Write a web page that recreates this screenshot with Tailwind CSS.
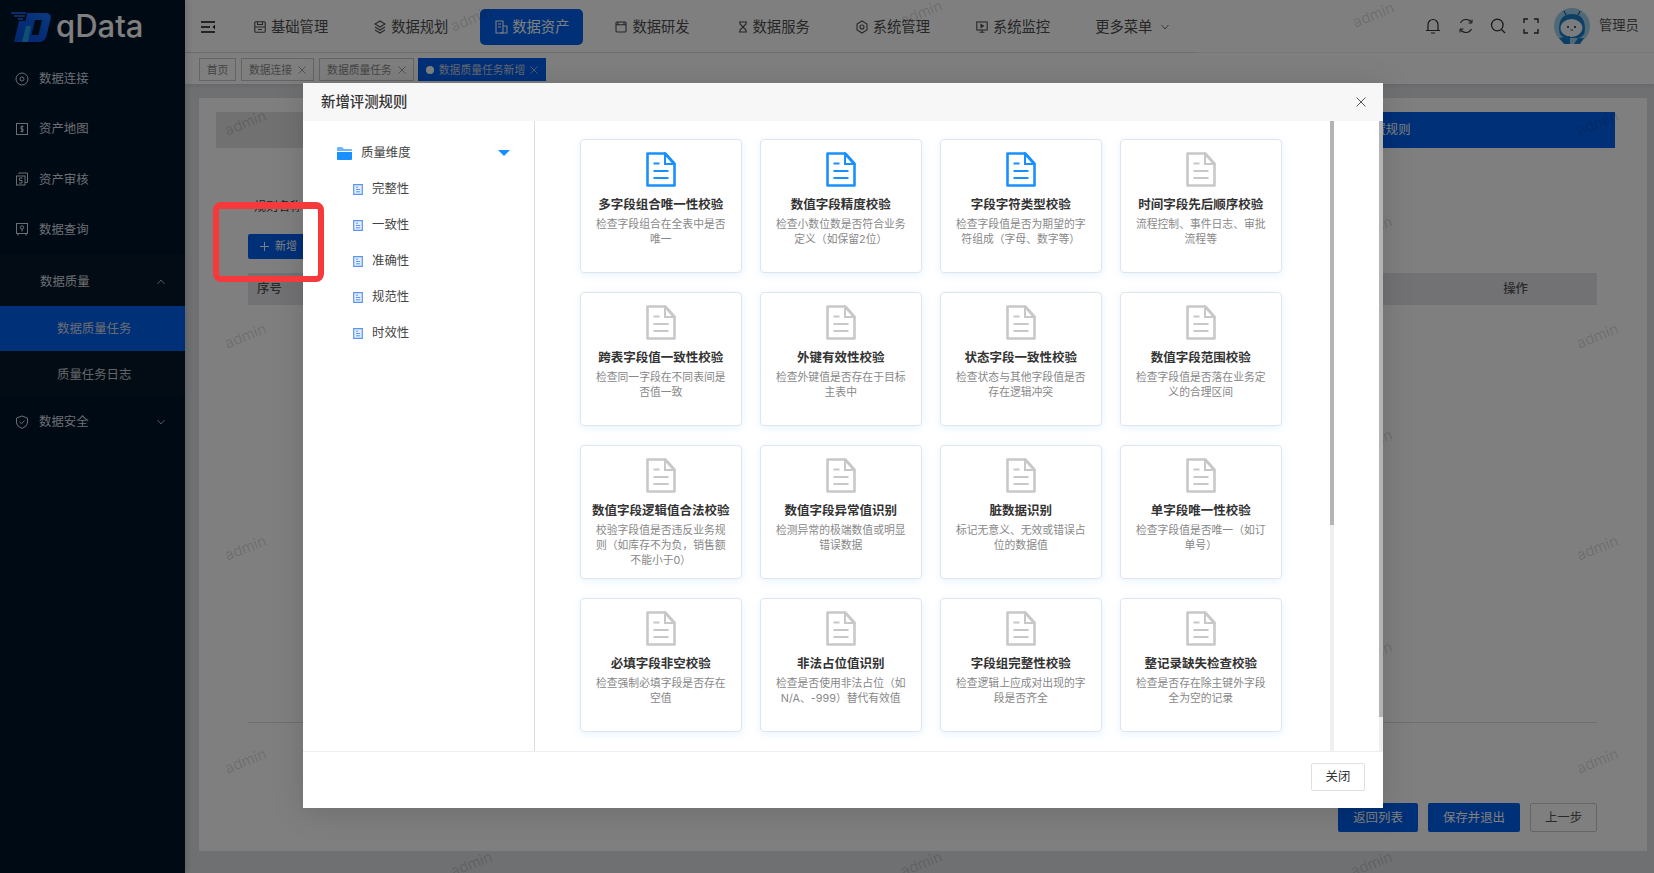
<!DOCTYPE html>
<html lang="zh-CN">
<head>
    <meta charset="UTF-8">
    <title>qData</title>
    <script src="https://cdn.jsdelivr.net/npm/@tailwindcss/browser@4"></script>
</head>
<body class="relative h-screen w-full overflow-hidden bg-[#dfe1e5] font-['Inter','Noto_Sans_CJK_SC',sans-serif]">
    <svg class="hidden">
        <symbol id="doc" viewBox="0 0 30 35">
            <path d="M1.5 1.5H19.5L28.5 11.5V33.5H1.5Z" fill="none" stroke="currentColor" stroke-width="2.6" stroke-linejoin="round"/>
            <path d="M19 2V12H28Z" fill="none" stroke="currentColor" stroke-width="2"/>
            <path d="M7.5 11.5H13.5M7.5 19H22.5M7.5 26H22.5" stroke="currentColor" stroke-width="2.2"/>
        </symbol>
        <symbol id="leaf" viewBox="0 0 10 11">
            <path d="M.7.7H9.3V10.3H.7Z" fill="#e6efff" stroke="#5b93f5" stroke-width="1.2"/>
            <path d="M3 3.2H5M3 5.5H7.2M3 7.8H7.2" stroke="#5b93f5" stroke-width="1"/>
        </symbol>
        <symbol id="tagx" viewBox="0 0 8 8">
            <path d="M.5.5L7.5 7.5M7.5.5L.5 7.5" fill="none" stroke="currentColor" stroke-width=".8"/>
        </symbol>
    </svg>

    <div class="flex h-full">
        <!-- 左侧菜单 -->
        <aside class="relative w-[185px] shrink-0 bg-[#001428] text-[12.4px] text-[#d6dbe0] shadow-[3px_0_6px_rgba(0,0,0,0.12)]">
            <div class="flex h-[54px] items-center pl-[11px]">
                <svg class="h-[30px] w-[40px]" viewBox="0 0 40 30">
                    <defs>
                        <linearGradient id="lg" x1="0" y1="1" x2="1" y2="0">
                            <stop offset="0" stop-color="#0a4ce0"/>
                            <stop offset=".55" stop-color="#0a5bf0"/>
                            <stop offset="1" stop-color="#1a78ff"/>
                        </linearGradient>
                    </defs>
                    <path d="M0 1H15M3 4H14M7 7H12" stroke="#1a70ff" stroke-width="1.4"/>
                    <path fill-rule="evenodd" d="M16 1H34Q41 1 39.5 7L35.5 24Q34 30 27 30H3L8 9H14.500ZM24 8L20.500 23H27.500L31 8Z" fill="url(#lg)"/>
                    <path d="M15 14H20L17 30H11Z" fill="#1f9fe0"/>
                </svg>
                <span class="-mt-[3px] ml-[5px] text-[31px] leading-none font-medium text-white">qData</span>
            </div>
            <div class="flex h-[50px] items-center pl-[15px]">
                <svg class="h-3.5 w-3.5" viewBox="0 0 14 14" fill="none" stroke="currentColor"><circle cx="7" cy="7" r="6"/><circle cx="7" cy="7" r="2"/></svg>
                <span class="ml-[10px]">数据连接</span>
            </div>
            <div class="flex h-[50px] items-center pl-[15px]">
                <svg class="h-3.5 w-3.5" viewBox="0 0 14 14" fill="none" stroke="currentColor"><rect x="1.5" y="1.5" width="11" height="11"/><path d="M8.5 4.5H6V7H8V9.5H5.5M7 3.5V10.5"/></svg>
                <span class="mt-[1px] ml-[10px]">资产地图</span>
            </div>
            <div class="flex h-[50px] items-center pl-[15px]">
                <svg class="h-3.5 w-3.5" viewBox="0 0 14 14" fill="none" stroke="currentColor"><rect x="1.5" y="4" width="8.5" height="9"/><path d="M4 2V1H12.5V10.5H10M7.5 6H4.5V8.5H7V11H4"/></svg>
                <span class="mt-[2px] ml-[10px]">资产审核</span>
            </div>
            <div class="flex h-[50px] items-center pl-[15px]">
                <svg class="h-3.5 w-3.5" viewBox="0 0 14 14" fill="none" stroke="currentColor"><rect x="1.5" y="1.5" width="11" height="10"/><circle cx="7" cy="5.5" r="1.7"/><path d="M7 7V9.5M3 12V13.5M11 12V13.5"/></svg>
                <span class="mt-[2px] ml-[10px]">数据查询</span>
            </div>
            <div class="flex h-[52px] items-center justify-between bg-[#061829] pt-[4px] pr-[20px] pl-[40px]">
                <span>数据质量</span>
                <svg class="h-1.5 w-2" viewBox="0 0 8 6" fill="none" stroke="currentColor" stroke-width=".8"><path d="M.5 5L4 1L7.5 5"/></svg>
            </div>
            <div class="flex h-[45px] items-center bg-[#0060f0] pt-[2px] pl-[57px]">数据质量任务</div>
            <div class="flex h-[45px] items-center bg-[#061829] pt-[4px] pl-[57px] text-[#c4cad0]">质量任务日志</div>
            <div class="flex h-[48px] items-center justify-between pt-[4px] pr-[20px] pl-[15px]">
                <span class="flex items-center">
                    <svg class="h-3.5 w-3.5" viewBox="0 0 14 14" fill="none" stroke="currentColor"><path d="M7 1L12.5 3V8Q12.5 11 7 13.5Q1.5 11 1.5 8V3Z"/><path d="M4.5 6.8L6.5 8.8L9.5 5.5"/></svg>
                    <span class="ml-[10px]">数据安全</span>
                </span>
                <svg class="h-1.5 w-2" viewBox="0 0 8 6" fill="none" stroke="currentColor" stroke-width=".8"><path d="M.5 1L4 5L7.5 1"/></svg>
            </div>
        </aside>

        <main class="flex min-w-0 flex-1 flex-col">
            <!-- 顶部导航 -->
            <header class="flex h-[53px] shrink-0 bg-white text-[14.3px] text-[#4d4d4d]">
                <div class="flex w-[1010px] items-center border-b border-[#dadada] pt-[1px] pl-[16px]">
                    <svg class="h-3 w-3.5 text-[#111]" viewBox="0 0 14 12" fill="none" stroke="currentColor" stroke-width="1.3"><path d="M0 1H14M0 6H9M0 11H14"/><path d="M14 3.8L11.5 6L14 8.2Z" fill="currentColor" stroke="none"/></svg>
                    <div class="ml-[39px] flex items-center gap-[5px]">
                        <svg class="h-3 w-3" viewBox="0 0 12 12" fill="none" stroke="currentColor" stroke-width="1.1"><rect x=".8" y=".8" width="10.4" height="10.4" rx="1"/><path d="M1 6H11M3.5 1V3.5H8.5V1M4 8.5H8"/></svg>
                        <span>基础管理</span>
                    </div>
                    <div class="ml-[46px] flex items-center gap-[5px]">
                        <svg class="h-3.5 w-3" viewBox="0 0 12 14" fill="none" stroke="currentColor" stroke-width="1.1"><path d="M6 1L11 4L6 7L1 4Z"/><path d="M1 7L6 10L11 7M1 10L6 13L11 10"/></svg>
                        <span>数据规划</span>
                    </div>
                    <div class="ml-[32px] flex h-[36px] w-[103px] items-center justify-center gap-[4px] rounded-[5px] bg-[#0060f0] text-white">
                        <svg class="h-3.5 w-3.5" viewBox="0 0 14 14" fill="none" stroke="currentColor" stroke-width="1.1"><path d="M2 1H9V13H2Z"/><path d="M9 6H13V13H6M4 4H7M4 7H7"/></svg>
                        <span>数据资产</span>
                    </div>
                    <div class="ml-[32px] flex items-center gap-[5px]">
                        <svg class="h-3 w-3" viewBox="0 0 12 12" fill="none" stroke="currentColor" stroke-width="1.1"><rect x="1" y="1" width="10" height="10" rx="1"/><path d="M1 3.8H11M3 1V3.8M9 1V3.8"/></svg>
                        <span>数据研发</span>
                    </div>
                    <div class="ml-[48px] flex items-center gap-[5px]">
                        <svg class="h-3 w-2.5" viewBox="0 0 10 12" fill="none" stroke="currentColor" stroke-width="1.1"><path d="M1 1H9M1 11H9M2 1V3L8 9V11M8 1V3L2 9V11"/></svg>
                        <span>数据服务</span>
                    </div>
                    <div class="ml-[46px] flex items-center gap-[5px]">
                        <svg class="h-3.5 w-3" viewBox="0 0 12 14" fill="none" stroke="currentColor" stroke-width="1.1"><path d="M6 1L11 4V10L6 13L1 10V4Z"/><circle cx="6" cy="7" r="2"/></svg>
                        <span>系统管理</span>
                    </div>
                    <div class="ml-[46px] flex items-center gap-[5px]">
                        <svg class="h-3 w-3" viewBox="0 0 12 12" fill="none" stroke="currentColor" stroke-width="1.1"><rect x=".8" y="1" width="10.4" height="8"/><path d="M6 9V11M3.5 11.2H8.5"/><path d="M5 3.5L7.5 5L5 6.5Z" fill="currentColor"/></svg>
                        <span>系统监控</span>
                    </div>
                    <div class="ml-[45px] flex items-center gap-[9px]">
                        <span>更多菜单</span>
                        <svg class="h-1.5 w-2" viewBox="0 0 8 6" fill="none" stroke="currentColor" stroke-width=".8"><path d="M.5 1L4 5L7.5 1"/></svg>
                    </div>
                </div>
                <div class="flex flex-1 items-center border-b border-[#eeeeee] pl-[230px] text-[13.3px] text-[#555]">
                    <svg class="h-4 w-4 text-[#333]" viewBox="0 0 16 16" fill="none" stroke="currentColor" stroke-width="1.2"><path d="M3 12.5V6.5A5 5 0 0 1 13 6.5V12.5M1 12.5H15M6 15H10"/></svg>
                    <svg class="ml-[17px] h-4 w-4 text-[#333]" viewBox="0 0 16 16" fill="none" stroke="currentColor" stroke-width="1.2"><path d="M2.5 5A6.3 6.3 0 0 1 13.5 4.500M13.5 11A6.3 6.3 0 0 1 2.5 11.5"/><path d="M14 1.5V5H10.5M2 14.5V11H5.5" stroke-width="1"/></svg>
                    <svg class="ml-[16px] h-4 w-4 text-[#333]" viewBox="0 0 16 16" fill="none" stroke="currentColor" stroke-width="1.3"><circle cx="7.3" cy="7" r="5.8"/><path d="M11.5 11.5L15 15"/></svg>
                    <svg class="ml-[17px] h-4 w-4 text-[#333]" viewBox="0 0 16 16" fill="none" stroke="currentColor" stroke-width="1.4"><path d="M1 5V1H5M11 1H15V5M15 11V15H11M5 15H1V11"/></svg>
                    <svg class="ml-[15px] h-[36px] w-[36px]" viewBox="0 0 36 36">
                        <circle cx="18" cy="18" r="18" fill="#a0d2ee"/>
                        <path d="M12 7L10 3M24 7L26 3" stroke="#0f5f9e" stroke-width="1.2"/>
                        <path d="M5 21Q5 6 18 6Q31 6 31 21Q31 29 24 30H12Q5 29 5 21Z" fill="#1a7ec8"/>
                        <ellipse cx="17.5" cy="20" rx="11" ry="9" fill="#f4f8fb"/>
                        <circle cx="14" cy="19" r="1" fill="#123"/><circle cx="21" cy="19" r="1" fill="#123"/>
                        <path d="M16.5 22H19" stroke="#123" stroke-width=".8"/>
                        <path d="M5 30L16 28V36H10ZM24 30L30 30L26 36H20Z" fill="#1a7ec8"/>
                    </svg>
                    <span class="ml-[9px]">管理员</span>
                </div>
            </header>

            <!-- 标签栏 -->
            <div class="flex h-[31px] shrink-0 items-start gap-[5px] bg-white pt-[5px] pl-[14px] text-[10.8px] text-[#8c8c8c] shadow-[0_2px_4px_rgba(0,0,0,0.08)]">
                <div class="flex h-[23px] w-[37px] items-center justify-center border border-[#c8c8c8] pt-[3px]">首页</div>
                <div class="flex h-[23px] w-[73px] items-center justify-center gap-[6px] border border-[#c8c8c8]"><span class="pt-[3px]">数据连接</span><svg class="h-2 w-2"><use href="#tagx"/></svg></div>
                <div class="flex h-[23px] w-[95px] items-center justify-center gap-[6px] border border-[#c8c8c8]"><span class="pt-[3px]">数据质量任务</span><svg class="h-2 w-2"><use href="#tagx"/></svg></div>
                <div class="-ml-[1px] flex h-[23px] w-[128px] items-center justify-center gap-[5px] bg-[#0060f0] text-[#ccd]">
                    <span class="h-2 w-2 rounded-full bg-white"></span><span class="pt-[3px]">数据质量任务新增</span><svg class="h-2 w-2"><use href="#tagx"/></svg>
                </div>
            </div>

            <!-- 内容区 -->
            <div class="flex min-h-0 flex-1 flex-col pt-[14px] pr-[7px] pb-[22px] pl-[14px]">
                <div class="flex flex-1 flex-col bg-white pt-[14px] pr-[32px] pl-[17px]">
                    <div class="flex h-[36px] shrink-0 text-[12.4px] text-white">
                        <div class="w-[400px] bg-[#e2e2e2]"></div>
                        <div class="flex flex-1 items-center bg-[#0060f0] pl-[745px]">配置规则</div>
                    </div>
                    <div class="mr-[18px] ml-[32px] flex flex-1 flex-col">
                        <div class="mt-[52px] ml-[6px] h-[14px] text-[12px] leading-[14px] text-[#444]">规则名称</div>
                        <div class="mt-[20px] flex h-[25px] w-[80px] items-center gap-[6px] rounded-[2px] bg-[#0060f0] pl-[12px] text-[11px] text-white">
                            <svg class="h-[9px] w-[9px]" viewBox="0 0 9 9" fill="none" stroke="currentColor"><path d="M4.5 0V9M0 4.5H9"/></svg>新增
                        </div>
                        <div class="mt-[14px] flex h-[32px] items-center justify-between bg-[#e4e4ea] pr-[69px] pl-[9px] text-[12.4px] font-medium text-[#555]">
                            <span>序号</span><span>操作</span>
                        </div>
                        <div class="flex-1 border-b border-[#dcdcdc]"></div>
                        <div class="mt-[80px] mb-[19px] flex h-[29px] justify-end gap-[10px] text-[12.4px]">
                            <div class="flex w-[80px] items-center justify-center rounded-[2px] bg-[#0060f0] pt-[2px] text-white">返回列表</div>
                            <div class="flex w-[92px] items-center justify-center rounded-[2px] bg-[#0060f0] pt-[2px] text-white">保存并退出</div>
                            <div class="flex w-[67px] items-center justify-center rounded-[2px] border border-[#ccc] pt-[2px] text-[#555]">上一步</div>
                        </div>
                    </div>
                </div>
            </div>
        </main>
    </div>

    <!-- 水印 -->
    <span class="absolute top-[8px] left-[450px] -rotate-[22deg] text-[15px] text-black/15">admin</span>
    <span class="absolute top-[2px] left-[900px] -rotate-[22deg] text-[15px] text-black/15">admin</span>
    <span class="absolute top-[4px] left-[1352px] -rotate-[22deg] text-[15px] text-black/15">admin</span>
    <span class="absolute top-[112px] left-[224px] -rotate-[22deg] text-[15px] text-black/15">admin</span>
    <span class="absolute top-[325px] left-[224px] -rotate-[22deg] text-[15px] text-black/15">admin</span>
    <span class="absolute top-[537px] left-[224px] -rotate-[22deg] text-[15px] text-black/15">admin</span>
    <span class="absolute top-[750px] left-[224px] -rotate-[22deg] text-[15px] text-black/15">admin</span>
    <span class="absolute top-[112px] left-[1576px] -rotate-[22deg] text-[15px] text-black/15">admin</span>
    <span class="absolute top-[325px] left-[1576px] -rotate-[22deg] text-[15px] text-black/15">admin</span>
    <span class="absolute top-[537px] left-[1576px] -rotate-[22deg] text-[15px] text-black/15">admin</span>
    <span class="absolute top-[750px] left-[1576px] -rotate-[22deg] text-[15px] text-black/15">admin</span>
    <span class="absolute top-[218px] left-[1350px] -rotate-[22deg] text-[15px] text-black/15">admin</span>
    <span class="absolute top-[431px] left-[1350px] -rotate-[22deg] text-[15px] text-black/15">admin</span>
    <span class="absolute top-[643px] left-[1350px] -rotate-[22deg] text-[15px] text-black/15">admin</span>
    <span class="absolute top-[853px] left-[1350px] -rotate-[22deg] text-[15px] text-black/15">admin</span>
    <span class="absolute top-[853px] left-[450px] -rotate-[22deg] text-[15px] text-black/15">admin</span>
    <span class="absolute top-[853px] left-[900px] -rotate-[22deg] text-[15px] text-black/15">admin</span>

    <!-- 遮罩 -->
    <div class="absolute inset-0 bg-black/50"></div>

    <!-- 弹窗 -->
    <div class="absolute top-[83px] left-[303px] flex h-[725px] w-[1080px] flex-col bg-white shadow-[0_4px_30px_rgba(0,0,0,0.15)]">
        <div class="flex h-[38px] shrink-0 items-center justify-between bg-[#f7f7f7] pr-[17px] pl-[18px]">
            <span class="text-[14.4px] font-medium text-[#333]">新增评测规则</span>
            <svg class="h-2.5 w-2.5 text-[#555]" viewBox="0 0 10 10" fill="none" stroke="currentColor"><path d="M.5 .5L9.5 9.5M9.5 .5L.5 9.5"/></svg>
        </div>
        <div class="flex min-h-0 flex-1">
            <!-- 维度树 -->
            <div class="w-[232px] shrink-0 border-r border-[#dcdcdc] pt-[14px] text-[12.4px] text-[#444]">
                <div class="flex h-[36px] items-center pr-[24px] pl-[34px]">
                    <svg class="h-[13px] w-[15px]" viewBox="0 0 15 13"><path d="M0 1Q0 0 1 0H5L7 2H14Q15 2 15 3V4H0Z" fill="#6db6ff"/><path d="M0 5H15V12Q15 13 14 13H1Q0 13 0 12Z" fill="#1890ff"/></svg>
                    <span class="ml-[9px] flex-1">质量维度</span>
                    <span class="h-0 w-0 border-x-[6px] border-t-[6px] border-x-transparent border-t-[#1890ff]"></span>
                </div>
                <div class="flex h-[36px] items-center pl-[50px]"><svg class="h-[11px] w-[10px]"><use href="#leaf"/></svg><span class="ml-[9px]">完整性</span></div>
                <div class="flex h-[36px] items-center pl-[50px]"><svg class="h-[11px] w-[10px]"><use href="#leaf"/></svg><span class="ml-[9px]">一致性</span></div>
                <div class="flex h-[36px] items-center pl-[50px]"><svg class="h-[11px] w-[10px]"><use href="#leaf"/></svg><span class="ml-[9px]">准确性</span></div>
                <div class="flex h-[36px] items-center pl-[50px]"><svg class="h-[11px] w-[10px]"><use href="#leaf"/></svg><span class="ml-[9px]">规范性</span></div>
                <div class="flex h-[36px] items-center pl-[50px]"><svg class="h-[11px] w-[10px]"><use href="#leaf"/></svg><span class="ml-[9px]">时效性</span></div>
            </div>

            <!-- 规则卡片 -->
            <div class="min-w-0 flex-1 overflow-hidden pt-[18px] pl-[45px]">
                <div class="grid grid-cols-[repeat(4,161.5px)] auto-rows-[134px] gap-x-[18.5px] gap-y-[19px]">
                    <div class="flex flex-col items-center rounded-[4px] border border-[#dfe4ef] pt-[12px] shadow-[0_2px_8px_rgba(24,144,255,0.1)]">
                        <svg class="h-[35px] w-[30px] text-[#1890ff]"><use href="#doc"/></svg>
                        <div class="mt-[9px] text-[12.5px] leading-[18px] font-bold text-[#333]">多字段组合唯一性校验</div>
                        <div class="mt-[3px] text-center text-[10.8px] leading-[15px] text-[#888]">检查字段组合在全表中是否<br>唯一</div>
                    </div>
                    <div class="flex flex-col items-center rounded-[4px] border border-[#dfe4ef] pt-[12px] shadow-[0_2px_8px_rgba(24,144,255,0.1)]">
                        <svg class="h-[35px] w-[30px] text-[#1890ff]"><use href="#doc"/></svg>
                        <div class="mt-[9px] text-[12.5px] leading-[18px] font-bold text-[#333]">数值字段精度校验</div>
                        <div class="mt-[3px] text-center text-[10.8px] leading-[15px] text-[#888]">检查小数位数是否符合业务<br>定义（如保留2位）</div>
                    </div>
                    <div class="flex flex-col items-center rounded-[4px] border border-[#dfe4ef] pt-[12px] shadow-[0_2px_8px_rgba(24,144,255,0.1)]">
                        <svg class="h-[35px] w-[30px] text-[#1890ff]"><use href="#doc"/></svg>
                        <div class="mt-[9px] text-[12.5px] leading-[18px] font-bold text-[#333]">字段字符类型校验</div>
                        <div class="mt-[3px] text-center text-[10.8px] leading-[15px] text-[#888]">检查字段值是否为期望的字<br>符组成（字母、数字等）</div>
                    </div>
                    <div class="flex flex-col items-center rounded-[4px] border border-[#dfe4ef] pt-[12px] shadow-[0_2px_8px_rgba(24,144,255,0.1)]">
                        <svg class="h-[35px] w-[30px] text-[#c8c8c8]"><use href="#doc"/></svg>
                        <div class="mt-[9px] text-[12.5px] leading-[18px] font-bold text-[#333]">时间字段先后顺序校验</div>
                        <div class="mt-[3px] text-center text-[10.8px] leading-[15px] text-[#888]">流程控制、事件日志、审批<br>流程等</div>
                    </div>

                    <div class="flex flex-col items-center rounded-[4px] border border-[#dfe4ef] pt-[12px] shadow-[0_2px_8px_rgba(24,144,255,0.1)]">
                        <svg class="h-[35px] w-[30px] text-[#c8c8c8]"><use href="#doc"/></svg>
                        <div class="mt-[9px] text-[12.5px] leading-[18px] font-bold text-[#333]">跨表字段值一致性校验</div>
                        <div class="mt-[3px] text-center text-[10.8px] leading-[15px] text-[#888]">检查同一字段在不同表间是<br>否值一致</div>
                    </div>
                    <div class="flex flex-col items-center rounded-[4px] border border-[#dfe4ef] pt-[12px] shadow-[0_2px_8px_rgba(24,144,255,0.1)]">
                        <svg class="h-[35px] w-[30px] text-[#c8c8c8]"><use href="#doc"/></svg>
                        <div class="mt-[9px] text-[12.5px] leading-[18px] font-bold text-[#333]">外键有效性校验</div>
                        <div class="mt-[3px] text-center text-[10.8px] leading-[15px] text-[#888]">检查外键值是否存在于目标<br>主表中</div>
                    </div>
                    <div class="flex flex-col items-center rounded-[4px] border border-[#dfe4ef] pt-[12px] shadow-[0_2px_8px_rgba(24,144,255,0.1)]">
                        <svg class="h-[35px] w-[30px] text-[#c8c8c8]"><use href="#doc"/></svg>
                        <div class="mt-[9px] text-[12.5px] leading-[18px] font-bold text-[#333]">状态字段一致性校验</div>
                        <div class="mt-[3px] text-center text-[10.8px] leading-[15px] text-[#888]">检查状态与其他字段值是否<br>存在逻辑冲突</div>
                    </div>
                    <div class="flex flex-col items-center rounded-[4px] border border-[#dfe4ef] pt-[12px] shadow-[0_2px_8px_rgba(24,144,255,0.1)]">
                        <svg class="h-[35px] w-[30px] text-[#c8c8c8]"><use href="#doc"/></svg>
                        <div class="mt-[9px] text-[12.5px] leading-[18px] font-bold text-[#333]">数值字段范围校验</div>
                        <div class="mt-[3px] text-center text-[10.8px] leading-[15px] text-[#888]">检查字段值是否落在业务定<br>义的合理区间</div>
                    </div>

                    <div class="flex flex-col items-center rounded-[4px] border border-[#dfe4ef] pt-[12px] shadow-[0_2px_8px_rgba(24,144,255,0.1)]">
                        <svg class="h-[35px] w-[30px] text-[#c8c8c8]"><use href="#doc"/></svg>
                        <div class="mt-[9px] text-[12.5px] leading-[18px] font-bold text-[#333]">数值字段逻辑值合法校验</div>
                        <div class="mt-[3px] text-center text-[10.8px] leading-[15px] text-[#888]">校验字段值是否违反业务规<br>则（如库存不为负，销售额<br>不能小于0）</div>
                    </div>
                    <div class="flex flex-col items-center rounded-[4px] border border-[#dfe4ef] pt-[12px] shadow-[0_2px_8px_rgba(24,144,255,0.1)]">
                        <svg class="h-[35px] w-[30px] text-[#c8c8c8]"><use href="#doc"/></svg>
                        <div class="mt-[9px] text-[12.5px] leading-[18px] font-bold text-[#333]">数值字段异常值识别</div>
                        <div class="mt-[3px] text-center text-[10.8px] leading-[15px] text-[#888]">检测异常的极端数值或明显<br>错误数据</div>
                    </div>
                    <div class="flex flex-col items-center rounded-[4px] border border-[#dfe4ef] pt-[12px] shadow-[0_2px_8px_rgba(24,144,255,0.1)]">
                        <svg class="h-[35px] w-[30px] text-[#c8c8c8]"><use href="#doc"/></svg>
                        <div class="mt-[9px] text-[12.5px] leading-[18px] font-bold text-[#333]">脏数据识别</div>
                        <div class="mt-[3px] text-center text-[10.8px] leading-[15px] text-[#888]">标记无意义、无效或错误占<br>位的数据值</div>
                    </div>
                    <div class="flex flex-col items-center rounded-[4px] border border-[#dfe4ef] pt-[12px] shadow-[0_2px_8px_rgba(24,144,255,0.1)]">
                        <svg class="h-[35px] w-[30px] text-[#c8c8c8]"><use href="#doc"/></svg>
                        <div class="mt-[9px] text-[12.5px] leading-[18px] font-bold text-[#333]">单字段唯一性校验</div>
                        <div class="mt-[3px] text-center text-[10.8px] leading-[15px] text-[#888]">检查字段值是否唯一（如订<br>单号）</div>
                    </div>

                    <div class="flex flex-col items-center rounded-[4px] border border-[#dfe4ef] pt-[12px] shadow-[0_2px_8px_rgba(24,144,255,0.1)]">
                        <svg class="h-[35px] w-[30px] text-[#c8c8c8]"><use href="#doc"/></svg>
                        <div class="mt-[9px] text-[12.5px] leading-[18px] font-bold text-[#333]">必填字段非空校验</div>
                        <div class="mt-[3px] text-center text-[10.8px] leading-[15px] text-[#888]">检查强制必填字段是否存在<br>空值</div>
                    </div>
                    <div class="flex flex-col items-center rounded-[4px] border border-[#dfe4ef] pt-[12px] shadow-[0_2px_8px_rgba(24,144,255,0.1)]">
                        <svg class="h-[35px] w-[30px] text-[#c8c8c8]"><use href="#doc"/></svg>
                        <div class="mt-[9px] text-[12.5px] leading-[18px] font-bold text-[#333]">非法占位值识别</div>
                        <div class="mt-[3px] text-center text-[10.8px] leading-[15px] text-[#888]">检查是否使用非法占位（如<br>N/A、-999）替代有效值</div>
                    </div>
                    <div class="flex flex-col items-center rounded-[4px] border border-[#dfe4ef] pt-[12px] shadow-[0_2px_8px_rgba(24,144,255,0.1)]">
                        <svg class="h-[35px] w-[30px] text-[#c8c8c8]"><use href="#doc"/></svg>
                        <div class="mt-[9px] text-[12.5px] leading-[18px] font-bold text-[#333]">字段组完整性校验</div>
                        <div class="mt-[3px] text-center text-[10.8px] leading-[15px] text-[#888]">检查逻辑上应成对出现的字<br>段是否齐全</div>
                    </div>
                    <div class="flex flex-col items-center rounded-[4px] border border-[#dfe4ef] pt-[12px] shadow-[0_2px_8px_rgba(24,144,255,0.1)]">
                        <svg class="h-[35px] w-[30px] text-[#c8c8c8]"><use href="#doc"/></svg>
                        <div class="mt-[9px] text-[12.5px] leading-[18px] font-bold text-[#333]">整记录缺失检查校验</div>
                        <div class="mt-[3px] text-center text-[10.8px] leading-[15px] text-[#888]">检查是否存在除主键外字段<br>全为空的记录</div>
                    </div>
                </div>
            </div>

            <!-- 滚动条 -->
            <div class="w-[4.5px] shrink-0 bg-[#efefef]"><div class="h-[404px] bg-[#b4b4b4]"></div></div>
            <div class="w-[44.5px] shrink-0"></div>
            <div class="w-[4.5px] shrink-0 bg-[#efefef]"><div class="h-[596px] bg-[#b4b4b4]"></div></div>
        </div>
        <div class="flex h-[57px] shrink-0 items-center justify-end border-t border-[#eeeeee] pr-[18px] pb-[7px]">
            <div class="flex h-[28px] w-[54px] items-center justify-center rounded-[2px] border border-[#dfdfe6] pt-[1px] text-[12.4px] text-[#333]">关闭</div>
        </div>
    </div>

    <!-- 红框标注 -->
    <div class="absolute top-[202px] left-[213px] h-[80px] w-[111px] rounded-[8px] border-[6px] border-t-[7px] border-[#f63a3c]"></div>
</body>
</html>
